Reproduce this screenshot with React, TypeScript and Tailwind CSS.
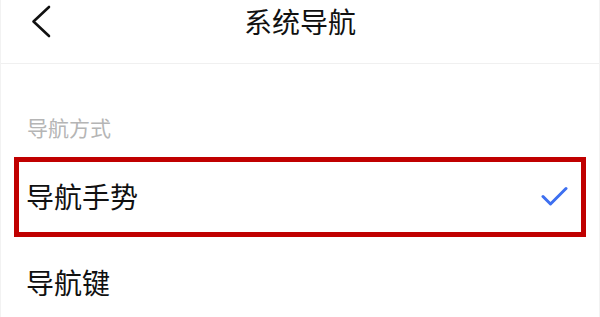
export default function App() {
  return (
    <div
      className="w-[600px] h-[317px] overflow-hidden bg-white text-[#111] border-x border-[#f2f2f2]"
      style={{ fontFamily: '"Noto Sans CJK SC", "Noto Sans", sans-serif' }}
    >
      {/* header */}
      <header className="relative h-[64px] border-b border-[#f0f0f0]">
        <div className="h-[43px] flex items-center justify-center">
          <h1 className="text-[28px] leading-[43px] font-normal">系统导航</h1>
        </div>
        <svg className="absolute left-[30px] top-[5px] w-[20px] h-[33px]" viewBox="0 0 20 33" fill="none">
          <path d="M18 2 L2.5 16.5 L18 31" stroke="#111" strokeWidth="2.6" strokeLinecap="round" strokeLinejoin="round" />
        </svg>
      </header>

      <div className="pl-[26px] pt-[51px] text-[21px] leading-[24px] text-[#b5b5b5]">导航方式</div>

      <div className="mt-[18px] mx-[13px] h-[80px] border-[5px] border-[#c00000] flex items-center justify-between pl-[7px] pr-[13px] pb-[2px]">
        <span className="text-[28px] leading-[36px]">导航手势</span>
        <svg className="w-[27px] h-[21px]" viewBox="0 0 27 21" fill="none">
          <path d="M2 10.5 L9.5 18 L25 2.5" stroke="#3d6ff0" strokeWidth="3" strokeLinecap="round" strokeLinejoin="round" />
        </svg>
      </div>

      <div className="pl-[25px] pt-[27px] text-[28px] leading-[36px]">导航键</div>
    </div>
  );
}
